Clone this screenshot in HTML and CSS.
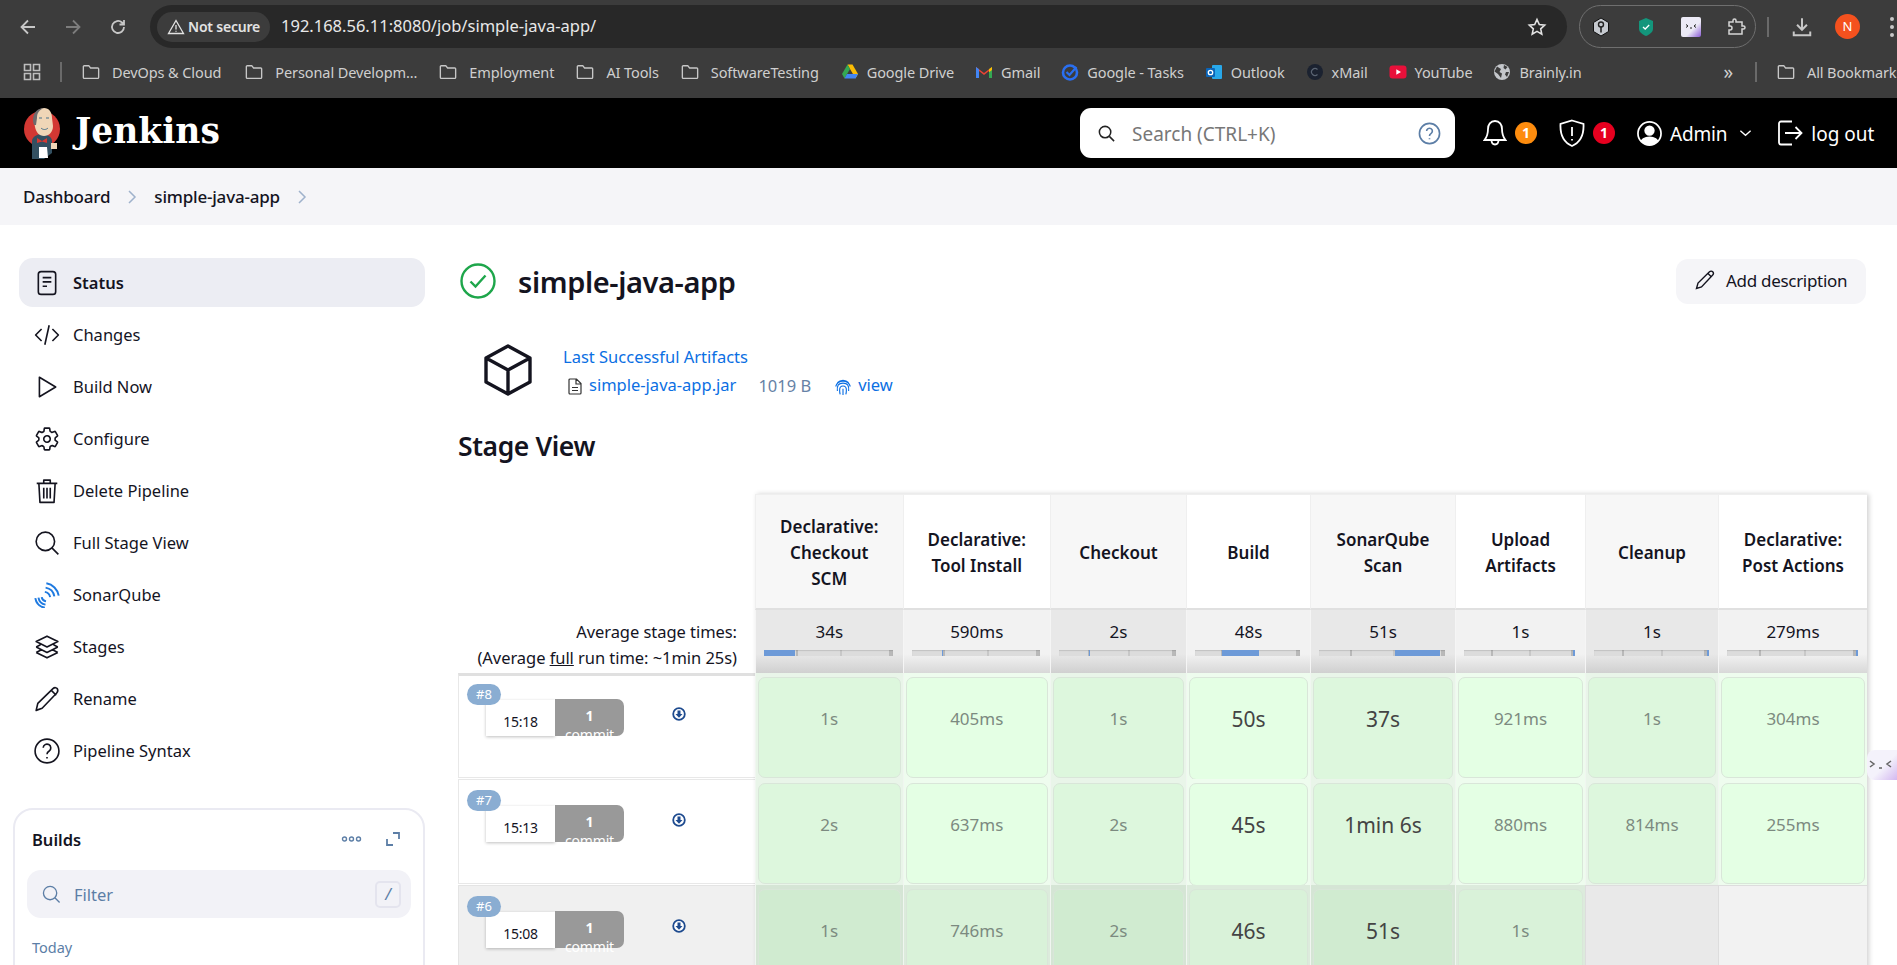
FILE: index.html
```html
<!DOCTYPE html>
<html lang="en">
<head>
    <meta charset="UTF-8">
    <meta name="viewport" content="width=device-width, initial-scale=1.0">
    <title>simple-java-app - Jenkins</title>
    <link rel="stylesheet" href="styles.css">
</head>
<body>
    <!-- browser chrome -->
    <div class="toolbar">
        <svg class="nav-icon first" viewBox="0 0 20 20"><path d="M17 10H4M10 3.500 3.500 10l6.500 6.500"/></svg>
        <svg class="nav-icon dim" viewBox="0 0 20 20"><path d="M3 10h13M10 3.500l6.500 6.500-6.500 6.500"/></svg>
        <svg class="nav-icon" viewBox="0 0 20 20"><path d="M16 10a6 6 0 1 1-2-4.500L16 7.500M16 3v4.500h-4.500"/></svg>
        <div class="urlbar">
            <div class="secure-chip">
                <svg viewBox="0 0 18 18" class="warn-icon"><path d="M9 2.500 16.500 15.500h-15zM9 7v4.500M9 12.800v1"/></svg>
                <span>Not secure</span>
            </div>
            <span class="url">192.168.56.11:8080/job/simple-java-app/</span>
            <svg class="star" viewBox="0 0 20 20"><path d="m10 2.500 2.300 5 5.400.6-4 3.700 1.100 5.400-4.800-2.800-4.800 2.800 1.100-5.400-4-3.700 5.400-.6z"/></svg>
        </div>
        <div class="ext-group">
            <svg class="ext" viewBox="0 0 20 20"><path d="M10 1 17.500 5.500v9L10 19l-7.500-4.500v-9z" fill="#c6cad0" stroke="#111" stroke-width="1"/><circle cx="10" cy="7.500" r="2.500" fill="none" stroke="#222" stroke-width="1.400"/><path d="M10 10v5.500" stroke="#222" stroke-width="1.600"/></svg>
            <svg class="ext" viewBox="0 0 20 20"><path d="M10 1 17 4v8c0 3-3.500 5.500-7 7-3.500-1.500-7-4-7-7V4z" fill="#13967c"/><path d="m7 10 2.200 2 4-4" fill="none" stroke="#fff" stroke-width="1.300"/></svg>
            <svg class="ext" viewBox="0 0 20 20"><defs><linearGradient id="extfill" x1="0" y1="0" x2="1" y2="1"><stop offset="0.6" stop-color="#eceaf6"/><stop offset="1" stop-color="#8a5ad6"/></linearGradient></defs><rect width="20" height="20" rx="2" fill="url(#extfill)"/><path d="m5 7.500 2 1.500-2 1.500M15 7.500 13 9l2 1.500M9 11h2" fill="none" stroke="#222" stroke-width="1"/></svg>
            <svg class="ext" viewBox="0 0 20 20"><path d="M3 5h4V3.500a1.500 1.500 0 0 1 3 0V5h6v4h1.500a1.500 1.500 0 0 1 0 3H16v5H3v-4h1a1.800 1.800 0 0 0 0-4H3z" fill="none" stroke="#d5d5d5" stroke-width="1.500"/></svg>
        </div>
        <div class="bar-sep"></div>
        <svg class="nav-icon download" viewBox="0 0 20 20"><path d="M10 2v10M5.500 8 10 12.500 14.500 8M2.500 14v3.500h15V14"/></svg>
        <div class="avatar">N</div>
        <div class="menu-dots"><i></i><i></i><i></i></div>
    </div>

    <div class="bookmarks">
        <svg class="apps" viewBox="0 0 18 18"><path d="M1.500 1.500h6v6h-6zM10.500 1.500h6v6h-6zM1.500 10.500h6v6h-6zM10.500 10.500h6v6h-6z"/></svg>
        <div class="bar-sep short"></div>
        <a class="mark"><svg class="folder" viewBox="0 0 20 18"><path d="M1.500 3a1 1 0 0 1 1-1h5l2 2.500h8a1 1 0 0 1 1 1V15a1 1 0 0 1-1 1h-15a1 1 0 0 1-1-1z"/></svg>DevOps &amp; Cloud</a>
        <a class="mark"><svg class="folder" viewBox="0 0 20 18"><path d="M1.500 3a1 1 0 0 1 1-1h5l2 2.500h8a1 1 0 0 1 1 1V15a1 1 0 0 1-1 1h-15a1 1 0 0 1-1-1z"/></svg>Personal Developm...</a>
        <a class="mark"><svg class="folder" viewBox="0 0 20 18"><path d="M1.500 3a1 1 0 0 1 1-1h5l2 2.500h8a1 1 0 0 1 1 1V15a1 1 0 0 1-1 1h-15a1 1 0 0 1-1-1z"/></svg>Employment</a>
        <a class="mark"><svg class="folder" viewBox="0 0 20 18"><path d="M1.500 3a1 1 0 0 1 1-1h5l2 2.500h8a1 1 0 0 1 1 1V15a1 1 0 0 1-1 1h-15a1 1 0 0 1-1-1z"/></svg>AI Tools</a>
        <a class="mark"><svg class="folder" viewBox="0 0 20 18"><path d="M1.500 3a1 1 0 0 1 1-1h5l2 2.500h8a1 1 0 0 1 1 1V15a1 1 0 0 1-1 1h-15a1 1 0 0 1-1-1z"/></svg>SoftwareTesting</a>
        <a class="mark site"><svg viewBox="0 0 18 18"><path d="M6.500 1.500h5L17 11l-2.500 4.500z" fill="#fbbc04"/><path d="M6.500 1.500 1 11l2.500 4.500L9 6z" fill="#34a853"/><path d="M3.500 15.500h11L17 11H6z" fill="#4285f4"/></svg>Google Drive</a>
        <a class="mark site"><svg viewBox="0 0 18 18"><path d="M1 15V4l8 6 8-6v11h-3V8l-5 4-5-4v7z" fill="#ea4335"/><path d="M1 15V4l3 2.300V15z" fill="#4285f4"/><path d="M17 15V4l-3 2.300V15z" fill="#34a853"/><path d="m14 6.300 3-2.300v3l-3 2.300z" fill="#fbbc04"/></svg>Gmail</a>
        <a class="mark site"><svg viewBox="0 0 18 18"><circle cx="9" cy="9.500" r="7" fill="none" stroke="#2a6ff0" stroke-width="2.600"/><path d="m5.500 9 3 3 7-8" fill="none" stroke="#2a6ff0" stroke-width="2.200"/></svg>Google - Tasks</a>
        <a class="mark site"><svg viewBox="0 0 18 18"><rect x="7" y="2" width="10" height="14" rx="1" fill="#28a8ea"/><rect x="1" y="5" width="9" height="9" rx="1" fill="#0a64b8"/><circle cx="5.500" cy="9.500" r="2.200" fill="none" stroke="#fff" stroke-width="1.300"/></svg>Outlook</a>
        <a class="mark site"><svg viewBox="0 0 18 18"><circle cx="9" cy="9" r="8" fill="#1b2230"/><path d="M11.500 6.500a3.500 3.500 0 1 0 0 5" fill="none" stroke="#5a6472" stroke-width="1.200"/></svg>xMail</a>
        <a class="mark site"><svg viewBox="0 0 18 18"><rect x="0.500" y="2.500" width="17" height="13" rx="3" fill="#e8103a"/><path d="M7.300 6.300 12 9l-4.700 2.700z" fill="#fff"/></svg>YouTube</a>
        <a class="mark site"><svg viewBox="0 0 18 18"><circle cx="9" cy="9" r="8" fill="#c4c7cb"/><path d="M4 3.500 8 6 6.500 9l2.500 1.500L8 15 5 11 1.500 8.500zM11 2l3.500 2-2 2.500L10.500 5zM16 9l-2 5-2-2.500 1-2.500z" fill="#3d3d3d"/></svg>Brainly.in</a>
        <span class="more">»</span>
        <div class="bar-sep short"></div>
        <a class="mark all"><svg class="folder" viewBox="0 0 20 18"><path d="M1.500 3a1 1 0 0 1 1-1h5l2 2.500h8a1 1 0 0 1 1 1V15a1 1 0 0 1-1 1h-15a1 1 0 0 1-1-1z"/></svg>All Bookmarks</a>
    </div>

    <!-- jenkins header -->
    <header class="jenkins-header">
        <svg class="logo" viewBox="0 0 36 52">
            <circle cx="18" cy="22" r="18" fill="#d33833"/>
            <path d="M8 52V34c0-4 5-7 10-7s10 3 10 7v12l-8 6z" fill="#335061"/>
            <path d="M10 14c0-8 5-13 10-13s8 4 8 10l1 8c0 6-4 10-9 10-5 0-8-4-9-9z" fill="#f0d6b7"/>
            <path d="M10 18C7 10 11 1 20 1c-5 2-7 5-7 10l-1 7z" fill="#6d6b6d"/>
            <path d="m13 31 5 3 5-3v5l-5-1.500L13 36z" fill="#d33833"/>
            <path d="M15 40h8l1 11h-9z" fill="#fff"/>
            <path d="M27 36h6v6h-6z" fill="#f0d6b7"/>
            <path d="M15 11h3M22 11h3M17 21c2 2 5 2 7 0" fill="none" stroke="#49728b" stroke-width="1"/>
        </svg>
        <span class="wordmark">Jenkins</span>
        <div class="search-box">
            <svg class="search-icon" viewBox="0 0 20 20"><circle cx="8.500" cy="8.500" r="6"/><path d="m13 13 5 5"/></svg>
            <span class="search-text">Search (CTRL+K)</span>
            <svg class="help-icon" viewBox="0 0 24 24"><circle cx="12" cy="12" r="10.500"/><path d="M9 9.500a3 3 0 1 1 4.500 2.600c-1 .6-1.500 1.200-1.500 2.400M12 17v1"/></svg>
        </div>
        <svg class="head-icon bell" viewBox="0 0 24 28"><path d="M12 2c-4.500 0-7 3.500-7 8 0 5-1 8-3.500 11h21C20 18 19 15 19 10c0-4.500-2.500-8-7-8zM8.500 21c0 6 7 6 7 0"/></svg>
        <span class="count orange">1</span>
        <svg class="head-icon shield" viewBox="0 0 26 28"><path d="M13 1.500 24.500 5c.5 10-2 18-11.500 22C3.500 23 1 15 1.500 5zM13 8v9M13 20v1.500"/></svg>
        <span class="count red">1</span>
        <svg class="head-icon user" viewBox="0 0 26 26"><defs><clipPath id="userclip"><circle cx="13" cy="13" r="12"/></clipPath></defs><circle cx="13" cy="13" r="12"/><circle cx="13" cy="10" r="4.500" fill="#fff"/><ellipse cx="13" cy="23" rx="9" ry="6" fill="#fff" clip-path="url(#userclip)"/></svg>
        <span class="admin">Admin</span>
        <svg class="chevron-down" viewBox="0 0 14 8"><path d="m1.500 1.500 5.500 5 5.500-5"/></svg>
        <svg class="head-icon logout" viewBox="0 0 26 26"><path d="M15 1.500H4a2 2 0 0 0-2 2v19a2 2 0 0 0 2 2h11M8 13h16.500M18.500 7l6 6-6 6"/></svg>
        <span class="logout-text">log out</span>
    </header>

    <nav class="breadcrumbs">
        <span>Dashboard</span>
        <svg viewBox="0 0 10 16"><path d="m2 2 6 6-6 6"/></svg>
        <span>simple-java-app</span>
        <svg viewBox="0 0 10 16"><path d="m2 2 6 6-6 6"/></svg>
    </nav>

    <div class="page">
        <aside class="side">
            <a class="side-item active">
                <svg viewBox="0 0 24 24"><rect x="4" y="1.500" width="16" height="21" rx="2.500"/><path d="M8 7h8M8 11h8M8 15h4"/></svg>
                Status
            </a>
            <a class="side-item">
                <svg viewBox="0 0 24 24"><path d="M7 6.500 1.500 12 7 17.500M17 6.500l5.500 5.500-5.500 5.500M14 3l-4 18"/></svg>
                Changes
            </a>
            <a class="side-item">
                <svg viewBox="0 0 24 24"><path d="M5 3v18l15-9z"/></svg>
                Build Now
            </a>
            <a class="side-item">
                <svg viewBox="0 0 512 512" class="gear"><path d="M262.290 192.310a64 64 0 1057.400 57.400 64.130 64.130 0 00-57.400-57.400zM416.390 256a154.340 154.340 0 01-1.530 20.790l45.210 35.460a10.810 10.810 0 012.450 13.750l-42.770 74a10.810 10.810 0 01-13.140 4.590l-44.900-18.080a16.110 16.110 0 00-15.170 1.750A164.480 164.480 0 01325 400.800a15.940 15.940 0 00-8.820 12.140l-6.730 47.890a11.080 11.080 0 01-10.680 9.170h-85.540a11.110 11.110 0 01-10.690-8.870l-6.720-47.820a16.070 16.070 0 00-9-12.220 155.300 155.300 0 01-21.460-12.570 16 16 0 00-15.110-1.710l-44.890 18.070a10.810 10.810 0 01-13.140-4.580l-42.770-74a10.800 10.800 0 012.450-13.750l38.210-30a16.050 16.050 0 006-14.080c-.36-4.170-.58-8.330-.58-12.500s.21-8.270.58-12.350a16 16 0 00-6.070-13.940l-38.190-30A10.810 10.810 0 0149.480 186l42.770-74a10.810 10.810 0 0113.140-4.590l44.900 18.080a16.110 16.110 0 0015.170-1.750A164.480 164.480 0 01187 111.200a15.940 15.940 0 008.820-12.140l6.730-47.890A11.080 11.080 0 01213.230 42h85.540a11.110 11.110 0 0110.690 8.870l6.720 47.820a16.070 16.070 0 009 12.220 155.300 155.300 0 0121.460 12.570 16 16 0 0015.110 1.710l44.890-18.070a10.810 10.810 0 0113.140 4.580l42.770 74a10.800 10.800 0 01-2.450 13.750l-38.210 30a16.050 16.050 0 00-6.050 14.080c.33 4.140.55 8.300.55 12.470z"/></svg>
                Configure
            </a>
            <a class="side-item">
                <svg viewBox="0 0 24 24"><path d="M2.500 5h19M9 5V2h6v3M4.500 5l1 17.500h13l1-17.500M9 9v10M12 9v10M15 9v10"/></svg>
                Delete Pipeline
            </a>
            <a class="side-item">
                <svg viewBox="0 0 24 24"><circle cx="10.500" cy="10.500" r="8.500"/><path d="m16.500 16.500 6 6"/></svg>
                Full Stage View
            </a>
            <a class="side-item">
                <svg class="sonar" viewBox="0 0 24 24"><path d="M10 9.100A6 6 0 0 1 14.900 14M10.700 5.200A10 10 0 0 1 18.800 13.300M11.400 1.200A14 14 0 0 1 22.800 12.600M11.100 17.900A5 5 0 0 1 7.100 13.900M10.600 20.900A8 8 0 0 1 4.100 14.400M10 23.800A11 11 0 0 1 1.200 14.900"/></svg>
                SonarQube
            </a>
            <a class="side-item">
                <svg viewBox="0 0 24 24"><path d="m12 2 10 5-10 5L2 7zM2 12l4-2M22 12l-4-2M2 12l10 5 10-5M2 17l4-2M22 17l-4-2M2 17l10 5 10-5"/></svg>
                Stages
            </a>
            <a class="side-item">
                <svg viewBox="0 0 24 24"><path d="M2 22.500 3.500 16 17.500 2.500c1.500-1.500 3.500-1 4 0s1 2.500-.5 4L7.500 20.500zM16 4l4.500 4.500"/></svg>
                Rename
            </a>
            <a class="side-item">
                <svg viewBox="0 0 24 24"><circle cx="12" cy="12" r="11"/><path d="M8.500 9a3.500 3.500 0 1 1 5.500 3c-1.300.8-2 1.500-2 3M12 17.500v1.500"/></svg>
                Pipeline Syntax
            </a>

            <section class="builds">
                <div class="builds-head">
                    <strong>Builds</strong>
                    <svg class="dots" viewBox="0 0 20 6"><circle cx="3" cy="3" r="2"/><circle cx="10" cy="3" r="2"/><circle cx="17" cy="3" r="2"/></svg>
                    <svg class="expand" viewBox="0 0 14 14"><path d="M7 1h6v6M7 13H1V7"/></svg>
                </div>
                <div class="filter">
                    <svg viewBox="0 0 20 20"><circle cx="8.500" cy="8.500" r="7"/><path d="m13.500 13.500 5 5"/></svg>
                    <span>Filter</span>
                    <kbd>/</kbd>
                </div>
                <div class="today">Today</div>
            </section>
        </aside>

        <main class="main">
            <div class="title-row">
                <svg class="check" viewBox="0 0 36 36"><circle cx="18" cy="18" r="16.500"/><path d="m10.500 18.500 5 5 10-11"/></svg>
                <h1>simple-java-app</h1>
                <a class="add-desc">
                    <svg viewBox="0 0 20 20"><path d="M1.500 18.500 3 13 14.500 1.800c1-1 2.500-.8 3.200 0s1 2.200 0 3.200L6.500 17zM13 3.500l3.500 3.500"/></svg>
                    Add description
                </a>
            </div>

            <div class="artifacts">
                <svg class="cube" viewBox="0 0 50 52"><path d="M25 2 47 14v24L25 50 3 38V14zM3 14l22 12 22-12M25 26v24"/></svg>
                <div>
                    <a class="link">Last Successful Artifacts</a>
                    <div class="artifact-row">
                        <svg class="doc" viewBox="0 0 14 17"><path d="M1 2a1 1 0 0 1 1-1h6.500L13 5.500V15a1 1 0 0 1-1 1H2a1 1 0 0 1-1-1zM8 1v5h5M4 9.500h6M4 12.500h6"/></svg>
                        <a class="link">simple-java-app.jar</a>
                        <span class="size">1019 B</span>
                        <svg class="print" viewBox="0 0 16 16"><path d="M3 4.500a7 7 0 0 1 10 0M1.500 8a6.800 6.800 0 0 1 13 0M3 12c-.5-5 1-7 5-7s5.500 2 5 7M5.500 15c-.5-1.500-.5-3-.5-4 0-2.500 1-3.500 3-3.500s3 1 3 3.500c0 1 0 2.500-.5 4M8 10v5.500"/></svg>
                        <a class="link">view</a>
                    </div>
                </div>
            </div>

            <h2>Stage View</h2>

            <div class="stage-view">
                <!-- stage names -->
                <div class="head-blank"></div>
                <div class="stage-head">Declarative: Checkout SCM</div>
                <div class="stage-head">Declarative: Tool Install</div>
                <div class="stage-head">Checkout</div>
                <div class="stage-head">Build</div>
                <div class="stage-head">SonarQube Scan</div>
                <div class="stage-head">Upload Artifacts</div>
                <div class="stage-head">Cleanup</div>
                <div class="stage-head">Declarative: Post Actions</div>

                <!-- averages -->
                <div class="avg-label">Average stage times:<br>(Average <u>full</u> run time: ~1min 25s)</div>
                <div class="avg">34s<div class="bar"><i style="left:0;width:24%"></i></div></div>
                <div class="avg">590ms<div class="bar"><i style="left:24%;width:1px"></i></div></div>
                <div class="avg">2s<div class="bar"><i style="left:26%;width:1px"></i></div></div>
                <div class="avg">48s<div class="bar"><i style="left:26%;width:35%"></i></div></div>
                <div class="avg">51s<div class="bar"><i style="left:60%;width:36%"></i></div></div>
                <div class="avg">1s<div class="bar"><i style="left:98%;width:2px"></i></div></div>
                <div class="avg">1s<div class="bar"><i style="left:99%;width:2px"></i></div></div>
                <div class="avg">279ms<div class="bar"><i style="left:99%;width:2px"></i></div></div>

                <!-- build #8 -->
                <div class="build-cell first">
                    <span class="build-no">#8</span>
                    <div class="build-time">15:18</div>
                    <div class="build-commit"><b>1</b><br>commit</div>
                    <svg class="get-log" viewBox="0 0 14 14"><circle cx="7" cy="7" r="5.800"/><path class="get-arrow" d="M5.500 3.500h3V7h2L7 10.800 3.500 7h2z"/></svg>
                </div>
                <div class="stage-cell"><div class="box">1s</div></div>
                <div class="stage-cell"><div class="box">405ms</div></div>
                <div class="stage-cell"><div class="box">1s</div></div>
                <div class="stage-cell"><div class="box long">50s</div></div>
                <div class="stage-cell"><div class="box long">37s</div></div>
                <div class="stage-cell"><div class="box">921ms</div></div>
                <div class="stage-cell"><div class="box">1s</div></div>
                <div class="stage-cell"><div class="box">304ms</div></div>

                <!-- build #7 -->
                <div class="build-cell">
                    <span class="build-no">#7</span>
                    <div class="build-time">15:13</div>
                    <div class="build-commit"><b>1</b><br>commit</div>
                    <svg class="get-log" viewBox="0 0 14 14"><circle cx="7" cy="7" r="5.800"/><path class="get-arrow" d="M5.500 3.500h3V7h2L7 10.800 3.500 7h2z"/></svg>
                </div>
                <div class="stage-cell"><div class="box">2s</div></div>
                <div class="stage-cell"><div class="box">637ms</div></div>
                <div class="stage-cell"><div class="box">2s</div></div>
                <div class="stage-cell"><div class="box long">45s</div></div>
                <div class="stage-cell"><div class="box long">1min 6s</div></div>
                <div class="stage-cell"><div class="box">880ms</div></div>
                <div class="stage-cell"><div class="box">814ms</div></div>
                <div class="stage-cell"><div class="box">255ms</div></div>

                <!-- build #6 -->
                <div class="build-cell shaded">
                    <span class="build-no">#6</span>
                    <div class="build-time">15:08</div>
                    <div class="build-commit"><b>1</b><br>commit</div>
                    <svg class="get-log" viewBox="0 0 14 14"><circle cx="7" cy="7" r="5.800"/><path class="get-arrow" d="M5.500 3.500h3V7h2L7 10.800 3.500 7h2z"/></svg>
                </div>
                <div class="stage-cell shaded"><div class="box">1s</div></div>
                <div class="stage-cell shaded"><div class="box">746ms</div></div>
                <div class="stage-cell shaded"><div class="box">2s</div></div>
                <div class="stage-cell shaded"><div class="box long">46s</div></div>
                <div class="stage-cell shaded"><div class="box long">51s</div></div>
                <div class="stage-cell shaded"><div class="box">1s</div></div>
                <div class="stage-cell empty"></div>
                <div class="stage-cell empty"></div>
            </div>
        </main>
    </div>

    <div class="floating-ext">
        <svg viewBox="0 0 30 14"><path d="m3 3 4 3-4 3M24 3l-4 3 4 3M12 10h3" fill="none" stroke="#666" stroke-width="1.500"/></svg>
    </div>
</body>
</html>
```

FILE: styles.css
```css
html, body {
    height: 100%;
}
body {
    margin: 0;
    height: 965px;
    overflow: hidden;
    position: relative;
    background-color: white;
    color: #14141f;
    font-family: "Noto Sans", "Open Sans", sans-serif;
    font-size: 16.5px;
}
svg {
    display: block;
    flex: none;
}

/* browser chrome */
.toolbar {
    height: 53px;
    background-color: #3c3c3c;
    display: flex;
    align-items: center;
}
.nav-icon {
    width: 20px;
    height: 20px;
    margin-right: 25px;
    fill: none;
    stroke: #c7c7c7;
    stroke-width: 1.8;
}
.nav-icon.first {
    margin-left: 18px;
}
.nav-icon.dim {
    stroke: #7d7d7d;
}
.urlbar {
    width: 1417px;
    height: 43px;
    margin-left: -3px;
    box-sizing: border-box;
    background-color: #282828;
    border-radius: 22px;
    display: flex;
    align-items: center;
    padding: 0 20px 0 7px;
}
.secure-chip {
    width: 113px;
    height: 30px;
    box-sizing: border-box;
    padding-left: 10px;
    border-radius: 15px;
    background-color: #3c3c3c;
    color: #e3e3e3;
    font-size: 14px;
    font-weight: 600;
    display: flex;
    align-items: center;
    gap: 3px;
    letter-spacing: -0.2px;
}
.warn-icon {
    width: 18px;
    height: 18px;
    fill: none;
    stroke: #e3e3e3;
    stroke-width: 1.3;
}
.url {
    margin: 0 0 3px 11px;
    color: #e8e8e8;
    font-size: 16.5px;
    flex: 1;
}
.star {
    width: 20px;
    height: 20px;
    fill: none;
    stroke: #e3e3e3;
    stroke-width: 1.6;
}
.ext-group {
    width: 177px;
    height: 43px;
    box-sizing: border-box;
    margin-left: 12px;
    border: 1px solid #6f6f6f;
    border-radius: 22px;
    display: flex;
    align-items: center;
    gap: 25px;
    padding-left: 11px;
}
.ext {
    width: 20px;
    height: 20px;
}
.bar-sep {
    width: 2px;
    height: 20px;
    margin-left: 11px;
    background-color: #6a6a6a;
}
.nav-icon.download {
    width: 22px;
    height: 22px;
    margin: 0 0 0 22px;
}
.avatar {
    width: 25px;
    height: 25px;
    margin-left: 22px;
    border-radius: 50%;
    background-color: #f4511e;
    color: white;
    font-size: 13px;
    line-height: 25px;
    text-align: center;
}
.menu-dots {
    margin-left: 30px;
    display: flex;
    flex-direction: column;
    gap: 4px;
}
.menu-dots i {
    width: 4px;
    height: 4px;
    border-radius: 50%;
    background-color: #c7c7c7;
}

.bookmarks {
    height: 38px;
    padding-bottom: 7px;
    background-color: #3c3c3c;
    color: #cfcfcf;
    font-size: 14.5px;
    letter-spacing: -0.1px;
    display: flex;
    align-items: center;
    white-space: nowrap;
}
.apps {
    width: 18px;
    height: 18px;
    margin-left: 23px;
    fill: none;
    stroke: #bdbdbd;
    stroke-width: 1.6;
}
.bookmarks .bar-sep.short {
    height: 20px;
    margin: 0 20px 0 19px;
}
.mark {
    display: flex;
    align-items: center;
    gap: 12px;
    margin-right: 22px;
}
.mark svg {
    width: 18px;
    height: 18px;
}
.mark.site {
    gap: 8px;
    margin-right: 21px;
}
.mark:nth-of-type(1) {
    margin-right: 24px;
}
.folder {
    fill: none;
    stroke: #c7c7c7;
    stroke-width: 1.5;
}
.more {
    margin-left: auto;
    margin-right: 3px;
    font-size: 19px;
    line-height: 20px;
}
.mark.all {
    width: 120px;
    flex: none;
    margin-right: 0;
    overflow: hidden;
}

/* jenkins header */
.jenkins-header {
    height: 70px;
    background-color: black;
    color: white;
    display: flex;
    align-items: center;
}
.logo {
    width: 36px;
    height: 52px;
    margin-left: 24px;
}
.wordmark {
    margin: 0 0 4px 15px;
    font-family: "DejaVu Serif", "Liberation Serif", serif;
    font-weight: bold;
    font-size: 34.5px;
    line-height: 40px;
    width: 145px;
}
.search-box {
    width: 375px;
    height: 50px;
    margin-left: 860px;
    box-sizing: border-box;
    padding: 0 14px 0 17px;
    background-color: white;
    border-radius: 11px;
    display: flex;
    align-items: center;
    color: #777;
    font-size: 19px;
}
.search-icon {
    width: 19px;
    height: 19px;
    fill: none;
    stroke: #222;
    stroke-width: 1.6;
}
.search-text {
    margin: 2px 0 0 16px;
    flex: 1;
}
.help-icon {
    width: 23px;
    height: 23px;
    fill: none;
    stroke: #5c7ea6;
    stroke-width: 1.7;
}
.head-icon {
    fill: none;
    stroke: white;
    stroke-width: 1.8;
}
.bell {
    width: 24px;
    height: 28px;
    margin-left: 28px;
}
.count {
    width: 22px;
    height: 22px;
    border-radius: 50%;
    margin-left: 8px;
    text-align: center;
    line-height: 22px;
    font-size: 14px;
    font-weight: bold;
}
.count.orange {
    background-color: #fd8c0e;
}
.count.red {
    background-color: #e6001f;
    margin-left: 8px;
}
.shield {
    width: 26px;
    height: 28px;
    margin-left: 22px;
}
.user {
    width: 25px;
    height: 25px;
    margin-left: 22px;
}
.admin {
    margin: 2px 0 0 8px;
    font-size: 19px;
    letter-spacing: -0.2px;
}
.chevron-down {
    width: 13px;
    height: 8px;
    margin-left: 12px;
    fill: none;
    stroke: white;
    stroke-width: 1.4;
}
.logout {
    width: 26px;
    height: 26px;
    margin-left: 25px;
}
.logout-text {
    margin: 2px 0 0 8px;
    font-size: 19px;
}

.breadcrumbs {
    height: 57px;
    box-sizing: border-box;
    padding-left: 23px;
    background-color: #f5f5f8;
    display: flex;
    align-items: center;
    font-weight: 500;
    font-size: 17px;
}
.breadcrumbs span {
    letter-spacing: -0.2px;
}
.breadcrumbs svg {
    width: 10px;
    height: 16px;
    margin: 0 17px 0 17px;
    fill: none;
    stroke: #9fb2cc;
    stroke-width: 1.5;
}

/* page body */
.page {
    display: flex;
    padding: 33px 0 0 19px;
}
.side {
    width: 406px;
    flex: none;
}
.side-item {
    display: flex;
    align-items: center;
    gap: 13px;
    height: 49px;
    margin-bottom: 3px;
    padding-left: 15px;
    border-radius: 14px;
}
.side-item svg {
    width: 26px;
    height: 26px;
    fill: none;
    stroke: #14141f;
    stroke-width: 1.5;
    stroke-linejoin: round;
}
.side-item svg.gear {
    stroke-width: 32;
}
.side-item svg.sonar {
    stroke: #1f7ae0;
    stroke-width: 1.8;
}
.side-item.active {
    background-color: #ecedf3;
    font-weight: 600;
}
.builds {
    margin: 33px 0 0 -6px;
    width: 412px;
    height: 200px;
    box-sizing: border-box;
    border: 2px solid #eaeaf2;
    border-radius: 20px;
    padding: 0 12px;
}
.builds-head {
    display: flex;
    align-items: center;
    height: 58px;
    padding: 0 11px 0 5px;
}
.builds-head strong {
    flex: 1;
    font-weight: 600;
}
.dots {
    width: 21px;
    height: 6px;
    fill: none;
    stroke: #5c7ea6;
    stroke-width: 1.4;
}
.expand {
    width: 14px;
    height: 14px;
    margin-left: 24px;
    fill: none;
    stroke: #5c7ea6;
    stroke-width: 1.8;
}
.filter {
    height: 48px;
    margin-top: 2px;
    background-color: #f2f2f7;
    border-radius: 14px;
    display: flex;
    align-items: center;
    padding: 0 10px 0 15px;
    color: #5c7ea6;
}
.filter svg {
    width: 19px;
    height: 19px;
    fill: none;
    stroke: #5c7ea6;
    stroke-width: 1.4;
}
.filter span {
    flex: 1;
    margin-left: 13px;
}
.filter kbd {
    width: 22px;
    height: 23px;
    border: 2px solid #e4e4ee;
    border-radius: 5px;
    text-align: center;
    line-height: 23px;
    font-family: "Noto Sans", sans-serif;
    font-size: 16px;
    font-style: italic;
}
.today {
    margin: 19px 0 0 5px;
    font-size: 14.5px;
    color: #5c7ea6;
}

.main {
    width: 1409px;
    margin-left: 33px;
    flex: none;
}
.title-row {
    display: flex;
    align-items: center;
    height: 46px;
}
.check {
    width: 36px;
    height: 36px;
    margin-left: 2px;
    fill: none;
    stroke: #1ea64b;
    stroke-width: 2.4;
}
h1 {
    margin: 2px 0 0 22px;
    flex: 1;
    font-size: 29px;
    font-weight: 600;
    line-height: 46px;
    letter-spacing: -0.4px;
}
.add-desc {
    width: 190px;
    height: 45px;
    margin-right: 1px;
    box-sizing: border-box;
    padding: 0 0 2px 19px;
    background-color: #f5f5f8;
    border-radius: 12px;
    display: flex;
    align-items: center;
    gap: 11px;
    font-size: 17px;
    letter-spacing: -0.3px;
}
.add-desc svg {
    width: 20px;
    height: 20px;
    fill: none;
    stroke: #14141f;
    stroke-width: 1.4;
}
.artifacts {
    display: flex;
    margin: 40px 0 0 25px;
    height: 54px;
    gap: 30px;
}
.cube {
    width: 50px;
    height: 52px;
    fill: none;
    stroke: #14141f;
    stroke-width: 3.4;
    stroke-linejoin: round;
}
.link {
    color: #0b6fe3;
    line-height: 26px;
}
.artifact-row {
    display: flex;
    align-items: center;
    height: 26px;
    margin: 2px 0 0 5px;
}
.doc {
    width: 14px;
    height: 17px;
    fill: none;
    stroke: #333;
    stroke-width: 1.2;
    margin-top: 3px;
}
.artifact-row .doc + .link {
    margin-left: 7px;
}
.size {
    margin-left: 22px;
    color: #6682a6;
}
.print {
    width: 18px;
    height: 19px;
    margin: 2px 6px 0 23px;
    fill: none;
    stroke: #0b6fe3;
    stroke-width: 1;
}
h2 {
    margin: 30px 0 30px;
    font-size: 26.5px;
    font-weight: 600;
    line-height: 36px;
    letter-spacing: -0.4px;
}

/* stage view */
.stage-view {
    display: grid;
    grid-template-columns: 297px 147.5px 147.5px 136px 124px 145px 130px 133px 149px;
    grid-template-rows: 116px 63px 106px 106px 106px;
    position: relative;
}
.stage-view::after {
    content: "";
    position: absolute;
    left: 297px;
    right: 0;
    top: 0;
    bottom: 0;
    box-shadow: 2px 0 5px rgba(0, 0, 0, 0.18);
    pointer-events: none;
}
.stage-head {
    display: flex;
    align-items: center;
    justify-content: center;
    padding: 2px 20px 0;
    text-align: center;
    font-size: 17px;
    font-weight: 600;
    line-height: 26px;
    border-left: 1px solid #efefef;
    border-top: 1px solid #efefef;
    border-bottom: 2px solid #e0e0e0;
    box-sizing: border-box;
}
.stage-head:nth-child(odd) {
    background-color: white;
}
.stage-head:nth-child(even) {
    background-color: #f7f7f7;
}
.avg-label {
    padding: 9px 18px 0 0;
    text-align: right;
    line-height: 26px;
    box-sizing: border-box;
    white-space: nowrap;
    letter-spacing: -0.05px;
}
.avg {
    text-align: center;
    padding-top: 9px;
    line-height: 26px;
    font-size: 17px;
    box-sizing: border-box;
    border-left: 1px solid #f5f5f5;
}
.avg:nth-child(even) {
    background: linear-gradient(#f2f2f2 70%, #d8d8d8);
}
.avg:nth-child(odd) {
    background: linear-gradient(#e8e8e8 70%, #d0d0d0);
}
.bar {
    position: relative;
    height: 6px;
    margin: 5px 10px 0 8px;
    background:
        linear-gradient(#b9b9b9, #b9b9b9) 25% 0 / 2px 100% no-repeat,
        linear-gradient(#c8c8c8, #c8c8c8) 60% 0 / 2px 100% no-repeat,
        linear-gradient(#b9b9b9, #b9b9b9) 100% 0 / 4px 100% no-repeat,
        #dcdcdc;
    box-shadow: inset 0 1px 1px rgba(0, 0, 0, 0.12);
}
.bar i {
    position: absolute;
    top: 0;
    bottom: 0;
    background-color: #6d9ad8;
}
.build-cell {
    display: flex;
    align-items: flex-start;
    position: relative;
    margin-bottom: 1px;
    padding: 26px 0 0 27px;
    box-sizing: border-box;
    border: 1px solid #e8e8e8;
    border-right: none;
}
.build-cell.first {
    border-top: 3px solid #e0e0e0;
    padding-top: 24px;
}
.build-cell.shaded {
    background-color: #f0f0f0;
    border-color: #e4e4e4;
}
.build-no {
    position: absolute;
    left: 8px;
    top: 10px;
    width: 34px;
    height: 21px;
    border-radius: 11px;
    background-color: #8aadd2;
    color: white;
    font-size: 13px;
    line-height: 21px;
    text-align: center;
}
.build-cell.first .build-no {
    top: 8px;
}
.build-time {
    width: 69px;
    height: 36px;
    box-sizing: border-box;
    padding-top: 9px;
    background-color: white;
    box-shadow: 0 1px 3px rgba(0, 0, 0, 0.25);
    font-size: 14px;
    line-height: 26px;
    text-align: center;
    letter-spacing: -0.3px;
}
.build-commit {
    width: 69px;
    height: 37px;
    margin-top: -1px;
    background-color: #999;
    border-radius: 0 7px 7px 0;
    color: white;
    font-size: 14px;
    line-height: 19px;
    text-align: center;
    padding-top: 7px;
    box-sizing: border-box;
    letter-spacing: -0.2px;
}
.get-log {
    width: 14px;
    height: 14px;
    margin: 7px 0 0 48px;
}
.get-log circle {
    fill: white;
    stroke: #1e4b8f;
    stroke-width: 1.8;
}
.get-arrow {
    fill: #1e4b8f;
}
.stage-cell {
    display: flex;
    background-color: #eefcee;
    border-left: 1px solid #f0f6f0;
    box-sizing: border-box;
}
.stage-cell:nth-child(9n+2), .stage-cell:nth-child(9n+4), .stage-cell:nth-child(9n+6), .stage-cell:nth-child(9n+8) {
    background-color: #e9f5e9;
}
.box {
    flex: 1;
    margin: 4px 2px 1px 2px;
    padding-top: 29px;
    box-sizing: border-box;
    border: 1px solid #d9e6d9;
    border-radius: 7px;
    background-color: #e4ffe4;
    text-align: center;
    color: #7c8a80;
    font-size: 17px;
    line-height: 24px;
}
.stage-cell:nth-child(9n+2) .box, .stage-cell:nth-child(9n+4) .box, .stage-cell:nth-child(9n+6) .box, .stage-cell:nth-child(9n+8) .box {
    background-color: #ddf7dd;
}
.box.long {
    margin-bottom: -1px;
    font-size: 21px;
    color: #444;
}
.stage-cell.shaded {
    background-color: #dcebdc;
}
.stage-cell.shaded .box {
    background-color: #d9f2d9;
}
.stage-cell.shaded:nth-child(9n+2), .stage-cell.shaded:nth-child(9n+4), .stage-cell.shaded:nth-child(9n+6), .stage-cell.shaded:nth-child(9n+8) {
    background-color: #d5e5d5;
}
.stage-cell.shaded:nth-child(9n+2) .box, .stage-cell.shaded:nth-child(9n+4) .box, .stage-cell.shaded:nth-child(9n+6) .box, .stage-cell.shaded:nth-child(9n+8) .box {
    background-color: #d0ebd0;
}
.stage-cell.empty {
    background-color: #f2f2f2;
    border-top: 1px solid #ddd;
    border-left: 1px solid #ddd;
}
.stage-cell.empty:nth-child(9n+8) {
    background-color: #e9e9e9;
}

.floating-ext {
    position: absolute;
    right: 0;
    top: 750px;
    width: 30px;
    height: 30px;
    border-radius: 8px 0 0 8px;
    background: linear-gradient(135deg, #f4f2fb 55%, #d3b8f0);
    padding-top: 8px;
    box-sizing: border-box;
}
```
